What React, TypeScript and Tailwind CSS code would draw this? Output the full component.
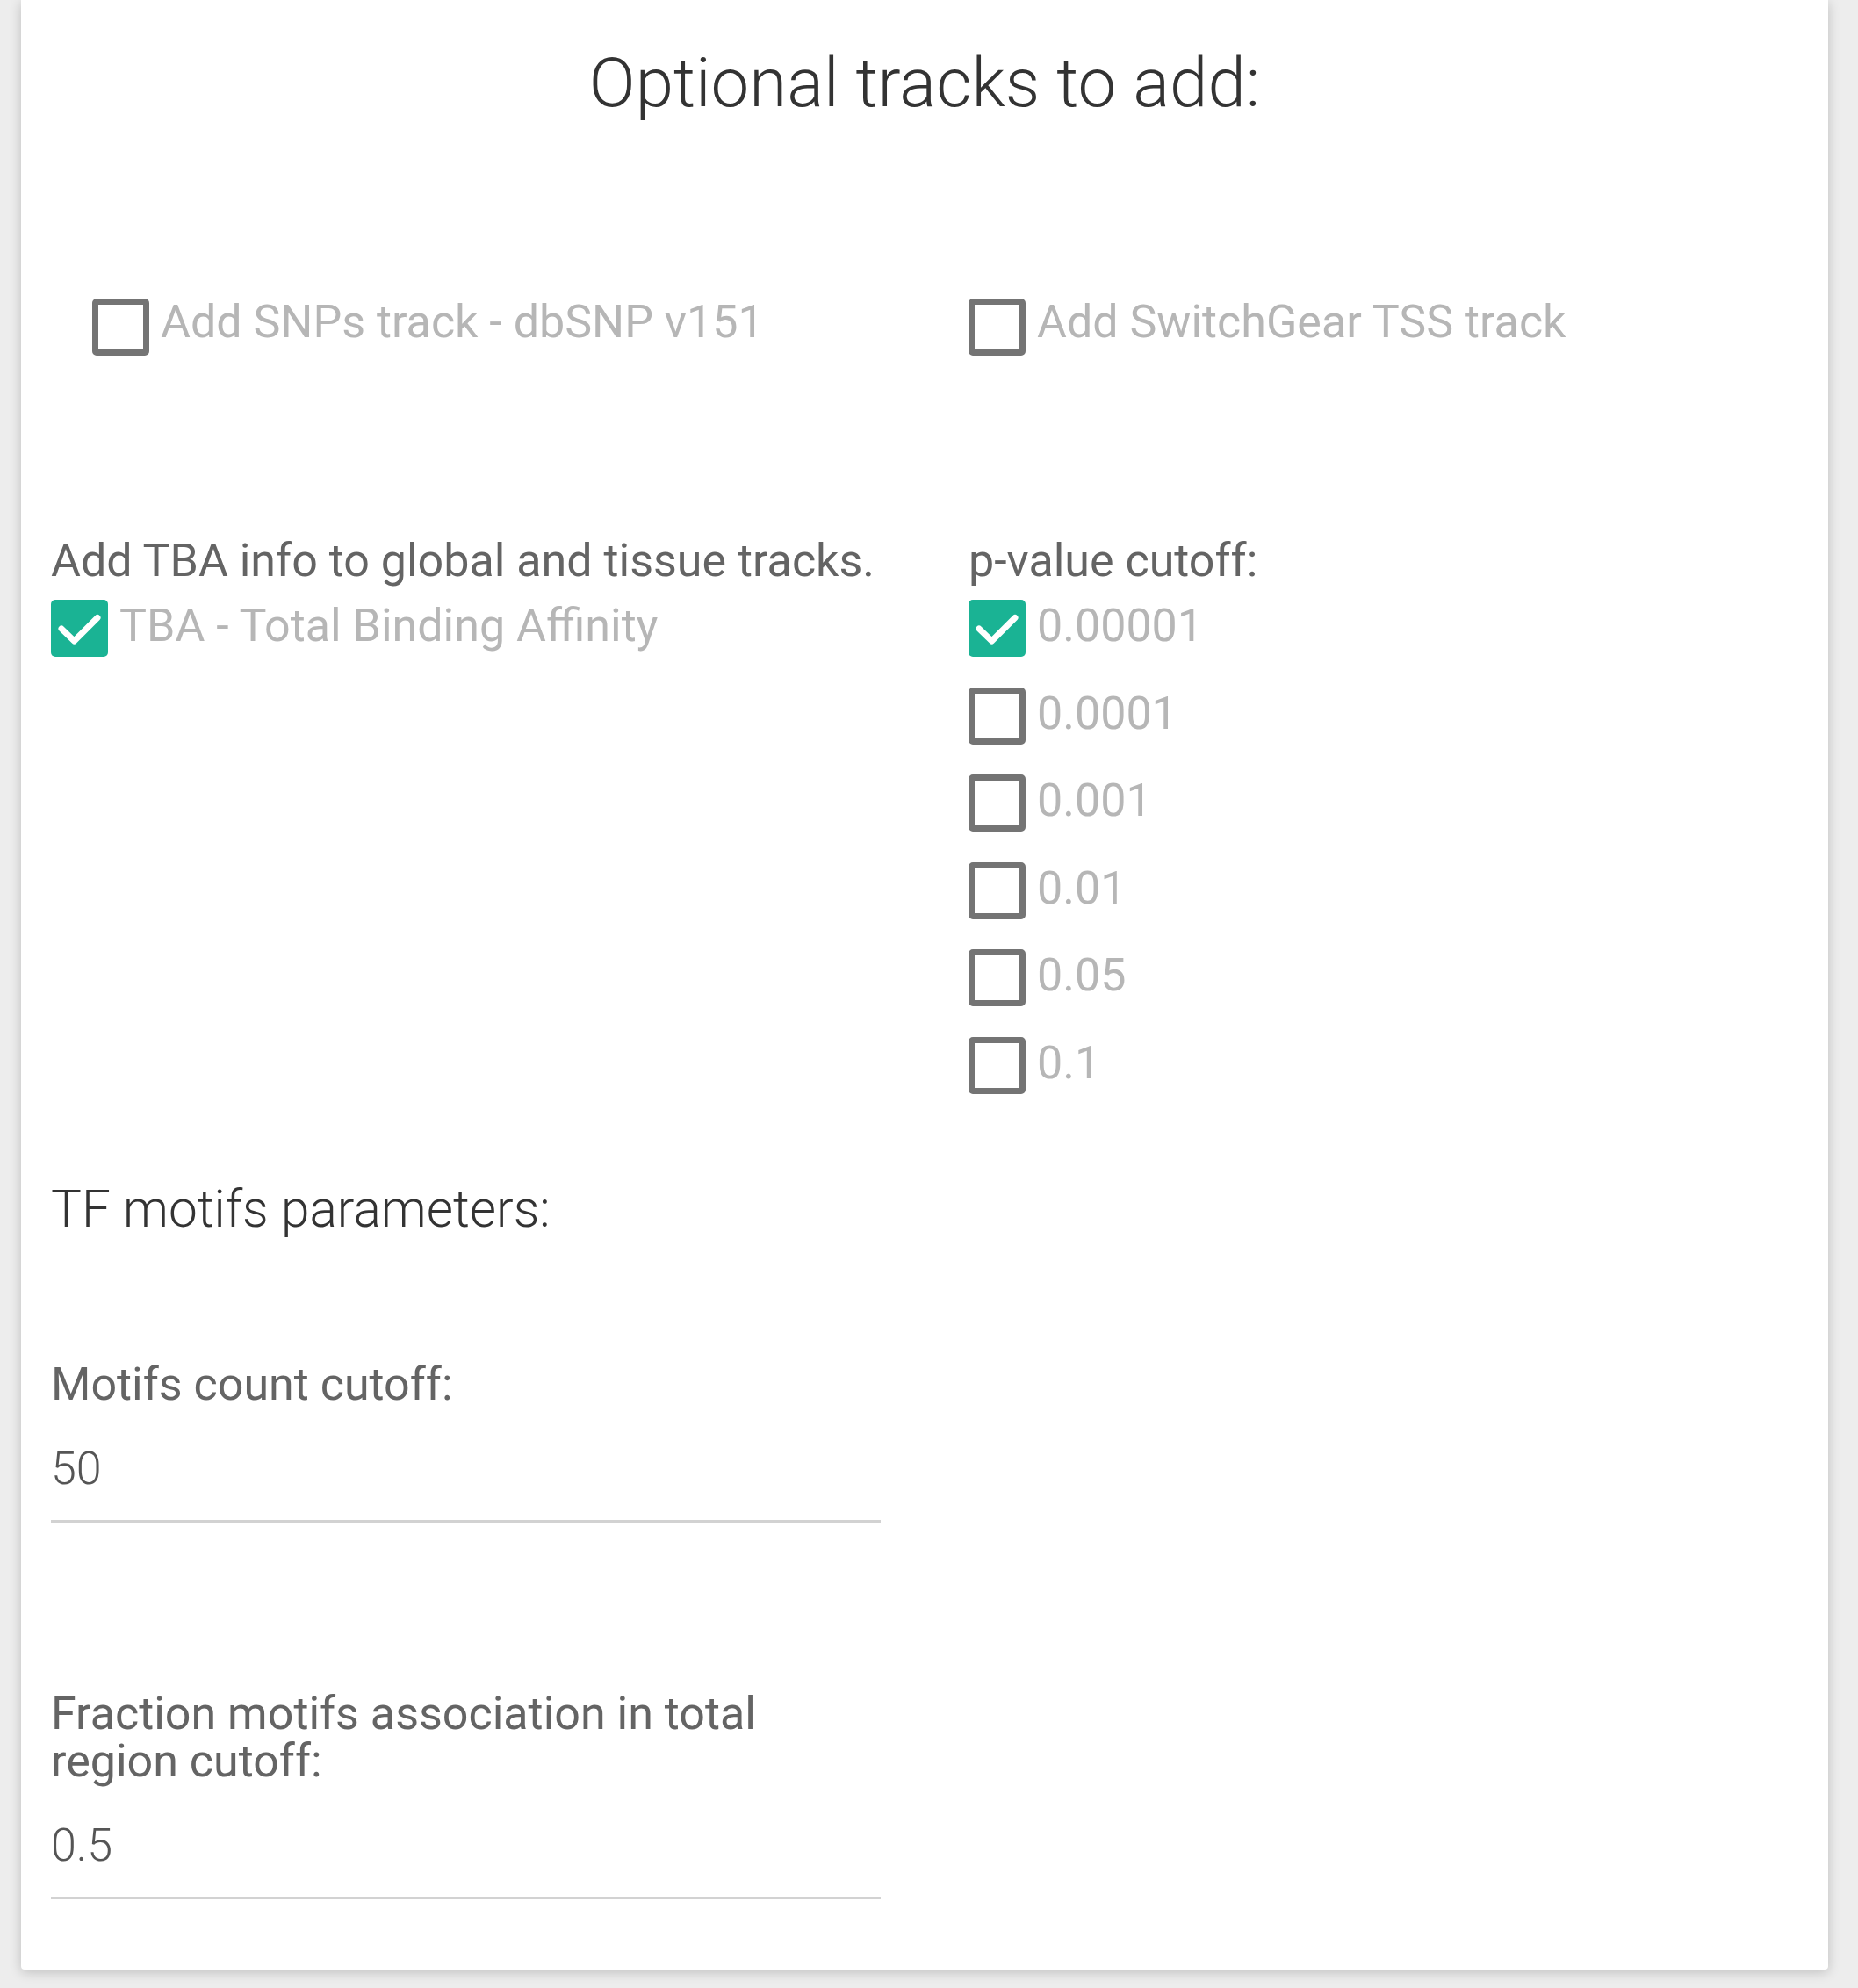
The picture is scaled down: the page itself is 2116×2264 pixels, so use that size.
import React from "react";

function Box({ checked, top }: { checked?: boolean; top: string }) {
  if (checked) {
    return (
      <div className={`${top} flex h-[65px] w-[65px] shrink-0 items-center justify-center rounded-[5px] bg-[#1ab394]`}>
        <svg width="65" height="65" viewBox="0 0 65 65">
          <path d="M12 33 L26.5 47 L53 20.5" fill="none" stroke="#ffffff" strokeWidth="7" strokeLinecap="round" strokeLinejoin="round" />
        </svg>
      </div>
    );
  }
  return <div className={`${top} box-border h-[65px] w-[65px] shrink-0 rounded-[5px] border-[7px] border-[#747474] bg-white`} />;
}

function Check({ label, checked, high }: { label: string; checked?: boolean; high?: boolean }) {
  return (
    <div className="flex items-start gap-[13px]">
      <Box checked={checked} top={high ? "mt-[6px]" : "mt-[3px]"} />
      <span className="text-[52px] leading-[65px] text-[#b6b6b6] whitespace-nowrap">{label}</span>
    </div>
  );
}

export default function App() {
  const pvals = ["0.00001", "0.0001", "0.001", "0.01", "0.05", "0.1"];
  return (
    <div className="min-h-[2264px] w-full bg-[#ededed] pl-[24px] pr-[34px] font-[family-name:Roboto,Arial,sans-serif]">
      <div className="rounded-b-[4px] bg-white px-[34px] pt-[56px] pb-[80px] shadow-[0_3px_14px_rgba(0,0,0,0.2)]">
        <h2 className="text-center text-[78px] leading-[78px] font-light text-[#333333]">Optional tracks to add:</h2>

        <div className="mt-[200px] grid grid-cols-[945px_945px] gap-x-[100px]">
          <div className="pl-[47px]">
            <Check high label="Add SNPs track - dbSNP v151" />
          </div>
          <div>
            <Check high label="Add SwitchGear TSS track" />
          </div>
        </div>

        <div className="mt-[204px] grid grid-cols-[945px_945px] gap-x-[100px]">
          <div>
            <div className="mb-[11px] text-[52px] leading-[60px] text-[#646464]">Add TBA info to global and tissue tracks.</div>
            <Check checked label="TBA - Total Binding Affinity" />
          </div>
          <div>
            <div className="mb-[11px] text-[52px] leading-[60px] text-[#646464]">p-value cutoff:</div>
            <div className="flex flex-col gap-[31.6px]">
              {pvals.map((p, i) => (
                <Check key={p} label={p} checked={i === 0} />
              ))}
            </div>
          </div>
        </div>

        <div className="mt-[102px] text-[58.5px] leading-[58px] font-light text-[#333333]">TF motifs parameters:</div>

        <div className="mt-[141px] w-[945px]">
          <div className="text-[52px] leading-[60px] text-[#646464]">Motifs count cutoff:</div>
          <div className="mt-[36px] border-b-[3px] border-[#d2d2d2] pb-[28px] text-[52px] leading-[60px] font-light text-[#555555]">50</div>
        </div>

        <div className="mt-[191px] w-[945px]">
          <div className="text-[52px] leading-[54px] text-[#646464]">Fraction motifs association in total region cutoff:</div>
          <div className="mt-[39px] border-b-[3px] border-[#d2d2d2] pb-[28px] text-[52px] leading-[60px] font-light text-[#555555]">0.5</div>
        </div>
      </div>
    </div>
  );
}
